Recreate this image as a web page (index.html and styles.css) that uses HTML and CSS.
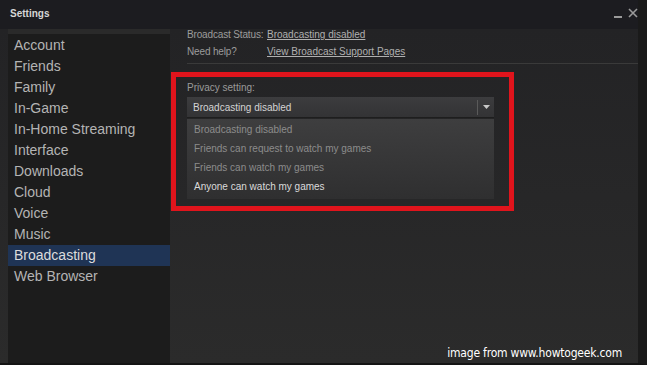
FILE: index.html
```html
<!DOCTYPE html>
<html>
<head>
<meta charset="utf-8">
<link rel="stylesheet" href="styles.css">
</head>
<body>
<div class="window">
  <div class="titlebar">
    <span class="title">Settings</span>
    <div class="controls">
      <span class="min"></span>
      <svg class="close" width="10" height="10" viewBox="0 0 10 10"><path d="M1 1 L9 9 M9 1 L1 9" stroke="#9a9a9a" stroke-width="1.6"/></svg>
    </div>
  </div>
  <div class="body">
    <nav class="sidebar">
      <div class="side-top"></div>
      <ul class="menu">
        <li>Account</li>
        <li>Friends</li>
        <li>Family</li>
        <li>In-Game</li>
        <li>In-Home Streaming</li>
        <li>Interface</li>
        <li>Downloads</li>
        <li>Cloud</li>
        <li>Voice</li>
        <li>Music</li>
        <li class="active">Broadcasting</li>
        <li>Web Browser</li>
      </ul>
    </nav>
    <main class="content">
      <div class="info">
        <div class="row"><span class="lbl">Broadcast Status:</span><a class="link">Broadcasting disabled</a></div>
        <div class="row"><span class="lbl">Need help?</span><a class="link">View Broadcast Support Pages</a></div>
      </div>
      <div class="sep"></div>
      <div class="highlight">
        <div class="plabel">Privacy setting:</div>
        <div class="select">
          <span class="sel-text">Broadcasting disabled</span>
          <span class="sel-btn"><svg width="7" height="4" viewBox="0 0 7 4"><path d="M0 0 H7 L3.5 4 Z" fill="#c8c8c8"/></svg></span>
        </div>
        <ul class="options">
          <li>Broadcasting disabled</li>
          <li>Friends can request to watch my games</li>
          <li>Friends can watch my games</li>
          <li class="hot">Anyone can watch my games</li>
        </ul>
      </div>
      <div class="caption">image from www.howtogeek.com</div>
    </main>
  </div>
</div>
</body>
</html>
```
FILE: styles.css
```css
* { box-sizing: border-box; }
html, body { margin: 0; padding: 0; }
body {
  width: 647px;
  height: 365px;
  overflow: hidden;
  background: #111;
  font-family: "Liberation Sans", Arial, sans-serif;
}
.window {
  width: 647px;
  height: 365px;
  display: flex;
  flex-direction: column;
  background: #1f1f22;
  border-right: 9px solid #1a1a1a;
  border-bottom: 2px solid #141414;
}
.titlebar {
  height: 29px;
  display: flex;
  align-items: center;
  justify-content: space-between;
  padding: 0 5px 3px 10px;
  background: #1c1c20;
}
.title {
  color: #d6d6d6;
  font-size: 10px;
  font-weight: bold;
}
.controls {
  display: flex;
  align-items: center;
  gap: 6px;
  margin-right: -5px;
}
.min {
  display: block;
  width: 8px;
  height: 2px;
  background: #9a9a9a;
  margin-top: 7px;
}
.body {
  flex: 1;
  display: flex;
  background: linear-gradient(#232325, #2b2b2b);
}
.sidebar {
  width: 162px;
  margin-left: 8px;
  background: #1c1c1c;
  display: flex;
  flex-direction: column;
}
.side-top {
  height: 5px;
  background: #2a2a2a;
}
.menu {
  list-style: none;
  margin: 1px 0 0 0;
  padding: 0;
}
.menu li {
  height: 21px;
  line-height: 21px;
  padding-left: 6px;
  font-size: 14px;
  color: #b4b4b4;
}
.menu li.active {
  background: #1f3455;
  color: #dcdcdc;
}
.content {
  flex: 1;
  position: relative;
  padding-left: 1px;
}
.info {
  padding: 0 0 0 16px;
}
.row {
  height: 16px;
  line-height: 16px;
  font-size: 10px;
  display: flex;
}
.row:first-child { margin-top: -2px; }
.row + .row { margin-top: 1px; }
.lbl {
  width: 80px;
  color: #9c9c9c;
  letter-spacing: -0.15px;
}
.link {
  color: #b0b0b0;
  text-decoration: underline;
}
.sep {
  margin: 3px 0 0 16px;
  height: 1px;
  background: #3a3a3a;
}
.highlight {
  margin-top: 8px;
  width: 343px;
  height: 139px;
  border: 5px solid #e0141c;
  padding: 6px 0 0 11px;
}
.plabel {
  font-size: 10px;
  color: #9a9a9a;
  height: 14px;
  line-height: 10px;
}
.select {
  width: 307px;
  height: 21px;
  display: flex;
  align-items: center;
  background: linear-gradient(#3c3c3e, #333335);
  border-bottom: 1px solid #1e1e1e;
}
.sel-text {
  flex: 1;
  font-size: 10px;
  color: #d4d4d4;
  padding-left: 6px;
}
.sel-btn {
  width: 17px;
  height: 15px;
  border-left: 1px solid #5a5a5a;
  display: flex;
  align-items: center;
  justify-content: center;
}
.options {
  list-style: none;
  margin: 1px 0 0 0;
  padding: 1px 0 0 0;
  width: 307px;
  height: 80px;
  background: linear-gradient(#3e3e3f, #2f2f30);
}
.options li {
  height: 19px;
  line-height: 19px;
  font-size: 10px;
  padding-left: 7px;
  color: #8c8c8c;
}
.options li.hot {
  color: #dadada;
  height: 20px;
}
.caption {
  position: absolute;
  right: 16px;
  bottom: 3px;
  color: #ffffff;
  font-family: "DejaVu Sans Condensed", "DejaVu Sans", sans-serif;
  font-size: 12px;
  letter-spacing: -0.2px;
}
```
